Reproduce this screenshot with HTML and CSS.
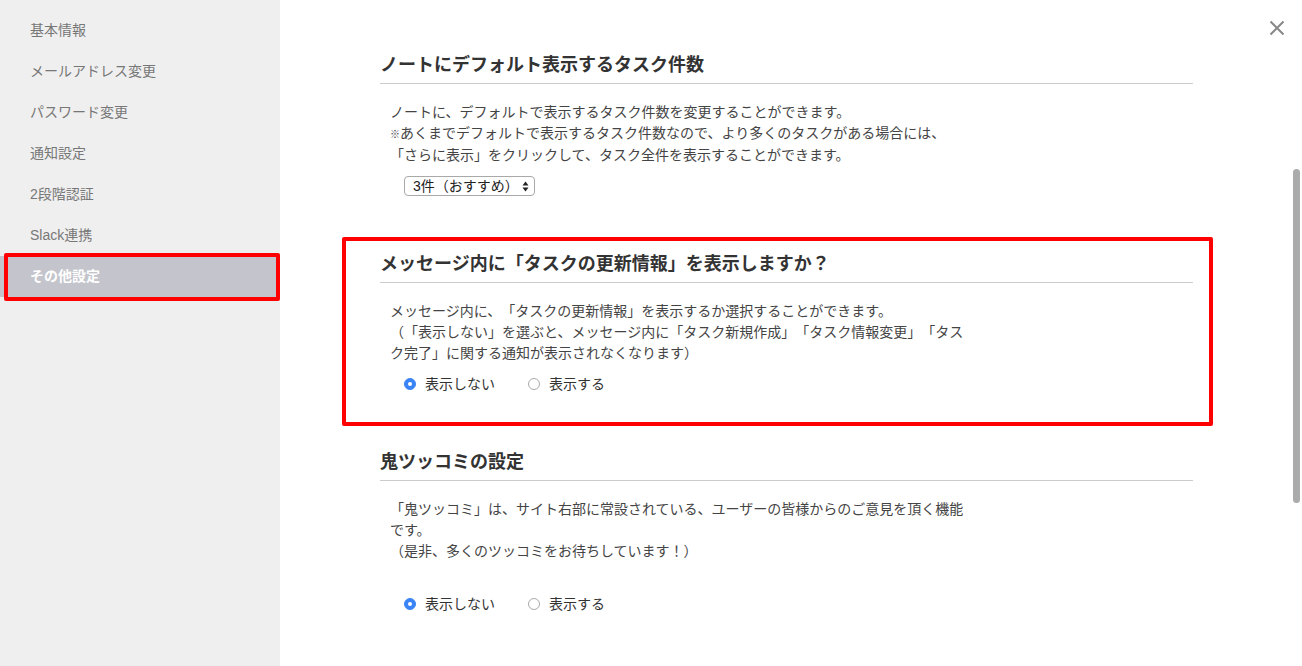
FILE: index.html
```html
<!DOCTYPE html>
<html lang="ja">
<head>
<meta charset="utf-8">
<title>その他設定</title>
<link rel="stylesheet" href="styles.css">
</head>
<body>
<div class="page">
  <nav class="sidebar">
    <div class="nav-item">基本情報</div>
    <div class="nav-item">メールアドレス変更</div>
    <div class="nav-item">パスワード変更</div>
    <div class="nav-item">通知設定</div>
    <div class="nav-item">2段階認証</div>
    <div class="nav-item">Slack連携</div>
    <div class="nav-item active">その他設定<span class="mark mark-nav"></span></div>
  </nav>
  <main class="main">
    <section class="section">
      <h2 class="section-title">ノートにデフォルト表示するタスク件数</h2>
      <p class="desc">ノートに、デフォルトで表示するタスク件数を変更することができます。<br><span class="note">※</span>あくまでデフォルトで表示するタスク件数なので、より多くのタスクがある場合には、<br>「さらに表示」をクリックして、タスク全件を表示することができます。</p>
      <div class="select">
        <span class="select-label">3件（おすすめ）</span>
        <svg class="select-arrows" width="7" height="11" viewBox="0 0 7 11"><path d="M3.5 0.5 L6.5 4.5 H0.5 Z" fill="#222"/><path d="M3.5 10.5 L6.5 6.5 H0.5 Z" fill="#222"/></svg>
      </div>
    </section>
    <section class="section">
      <span class="mark mark-section"></span>
      <h2 class="section-title">メッセージ内に「タスクの更新情報」を表示しますか？</h2>
      <p class="desc wrap">メッセージ内に、「タスクの更新情報」を表示するか選択することができます。<br>（「表示しない」を選ぶと、メッセージ内に「タスク新規作成」「タスク情報変更」「タスク完了」に関する通知が表示されなくなります）</p>
      <div class="radios">
        <label class="radio"><span class="dot checked"></span>表示しない</label>
        <label class="radio"><span class="dot"></span>表示する</label>
      </div>
    </section>
    <section class="section">
      <h2 class="section-title">鬼ツッコミの設定</h2>
      <p class="desc wrap">「鬼ツッコミ」は、サイト右部に常設されている、ユーザーの皆様からのご意見を頂く機能です。<br>（是非、多くのツッコミをお待ちしています！）</p>
      <div class="radios radios-far">
        <label class="radio"><span class="dot checked"></span>表示しない</label>
        <label class="radio"><span class="dot"></span>表示する</label>
      </div>
    </section>
  </main>
  <svg class="close" width="16" height="16" viewBox="0 0 16 16"><path d="M1.5 1.5 L14.5 14.5 M14.5 1.5 L1.5 14.5" stroke="#888" stroke-width="2" fill="none"/></svg>
  <div class="scroll-thumb"></div>
</div>
</body>
</html>
```

FILE: styles.css
```css
* { box-sizing: border-box; }
html, body {
  margin: 0;
  padding: 0;
  height: 100%;
  overflow: hidden;
}
body {
  font-family: "Liberation Sans", "Noto Sans CJK JP", sans-serif;
  background: #fff;
  color: #333;
  text-spacing-trim: space-all;
}
.page {
  position: relative;
  display: flex;
  height: 666px;
}
.sidebar {
  width: 280px;
  flex: none;
  background: #efefef;
  padding-top: 10px;
}
.nav-item {
  position: relative;
  height: 41px;
  line-height: 41px;
  padding-left: 30px;
  font-size: 14px;
  color: #777;
}
.nav-item.active {
  background: #c4c5cc;
  color: #fff;
  font-weight: bold;
}
.mark {
  position: absolute;
  border: 4px solid #f00;
  border-radius: 2px;
  pointer-events: none;
}
.mark-nav {
  left: 4px;
  right: 0;
  top: -3px;
  bottom: -4px;
}
.main {
  flex: 1;
  padding: 53px 0 0 100px;
}
.section {
  position: relative;
  width: 813px;
  margin-bottom: 56px;
}
.mark-section {
  left: -38px;
  right: -20px;
  top: -15px;
  bottom: -32px;
}
.section-title {
  margin: 0;
  font-size: 18px;
  line-height: 24px;
  font-weight: bold;
  color: #333;
  padding-bottom: 6px;
  border-bottom: 1px solid #ccc;
}
.desc {
  margin: 18px 0 0 10px;
  font-size: 14px;
  line-height: 21px;
  color: #444;
}
.desc.wrap {
  width: 580px;
}
.note {
  font-size: 10px;
}
.select {
  margin: 10px 0 0 24px;
  width: 131px;
  height: 20px;
  border: 1px solid #a9a9a9;
  border-radius: 4px;
  display: flex;
  align-items: center;
  justify-content: space-between;
  padding: 0 5px 0 8px;
  font-size: 14px;
  color: #222;
  background: #fff;
}
.select-label {
  line-height: 18px;
}
.radios {
  display: flex;
  gap: 33px;
  margin: 10px 0 0 24px;
  height: 20px;
  align-items: center;
}
.radios-far {
  margin-top: 32px;
}
.radio {
  display: flex;
  align-items: center;
  gap: 9px;
  font-size: 14px;
  color: #333;
  line-height: 20px;
}
.dot {
  width: 12px;
  height: 12px;
  border-radius: 50%;
  border: 1px solid #aaa;
  background: #fff;
  position: relative;
}
.dot.checked {
  border-color: #3b84f5;
  background: #3b84f5;
}
.dot.checked::after {
  content: "";
  position: absolute;
  left: 50%;
  top: 50%;
  width: 4px;
  height: 4px;
  margin: -2px 0 0 -2px;
  border-radius: 50%;
  background: #fff;
}
.close {
  position: absolute;
  left: 1269px;
  top: 20px;
}
.scroll-thumb {
  position: absolute;
  left: 1293px;
  top: 169px;
  width: 7px;
  height: 334px;
  border-radius: 4px;
  background: #ababab;
}
```
